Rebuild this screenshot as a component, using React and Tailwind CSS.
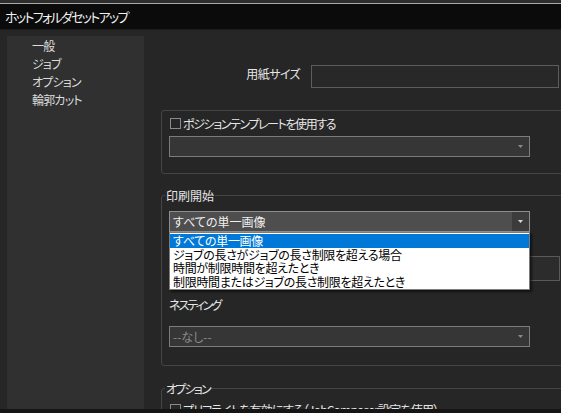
const jp = "font-['Noto_Sans_CJK_JP','Noto_Sans',sans-serif] [font-feature-settings:'palt']";

function Arrow({ color = '#9a9a9a' }) {
  return (
    <svg width="5" height="3" viewBox="0 0 5 3" className="shrink-0">
      <path d="M0 0H5L2.5 3Z" fill={color} />
    </svg>
  );
}

function Select({ value, muted, hover }) {
  return (
    <div
      className={`flex h-[21px] w-[361px] items-center border ${
        hover ? 'border-[#8e8e8e] bg-[#4e4e4e]' : 'border-[#7c7c7c] bg-[#363636]'
      }`}
    >
      <span className={`flex-1 pl-[3px] text-[12px] leading-[14px] ${muted ? 'text-[#8a8a8a]' : 'text-[#f0f0f0]'}`}>
        {value}
      </span>
      <div className={`flex h-full w-[17px] items-center justify-center ${hover ? 'bg-[#3c3c3c]' : ''}`}>
        <Arrow color={hover ? '#d8d8d8' : '#8a8a8a'} />
      </div>
    </div>
  );
}

function Check({ label, tracking }) {
  return (
    <div className="flex h-[11px] items-center gap-[2px] pl-[8px]">
      <div className="h-[11px] w-[11px] shrink-0 border border-[#8a8a8a]" />
      <span className={`whitespace-nowrap text-[12px] leading-[14px] text-[#e6e6e6] ${tracking}`}>{label}</span>
    </div>
  );
}

const options = [
  'すべての単一画像',
  'ジョブの長さがジョブの長さ制限を超える場合',
  '時間が制限時間を超えたとき',
  '制限時間またはジョブの長さ制限を超えたとき',
];

export default function App() {
  return (
    <div className={`flex h-[413px] w-[561px] flex-col overflow-hidden bg-[#262626] ${jp}`}>
      <div className="h-[3px] bg-[#2e2e2e]" />
      <div className="h-px bg-[#a9a9a9]" />
      <div className="flex h-[26px] items-center border-b border-[#1b1b1b] bg-[#0b0b0b] pl-[5px]">
        <span className="text-[13px] leading-[16px] tracking-[-1.7px] text-[#f2f2f2]">ホットフォルダセットアップ</span>
      </div>

      <div className="flex min-h-0 flex-1">
        <div className="ml-[7px] mt-[6px] w-[137px] shrink-0 bg-[#303030] pl-[25px] pt-[1px]">
          {['一般', 'ジョブ', 'オプション', '輪郭カット'].map((t) => (
            <div key={t} className="text-[12px] leading-[18px] tracking-[-0.8px] text-[#dcdcdc]">
              {t}
            </div>
          ))}
        </div>

        <div className="min-w-0 flex-1 overflow-hidden pt-[35px]">
          <div className="flex items-center justify-end gap-[11px] pr-[2px]">
            <span className="-mt-[5px] text-[12px] leading-[14px] tracking-[-0.6px] text-[#e6e6e6]">用紙サイズ</span>
            <div className="h-[23px] w-[248px] border border-[#5c5c5c] bg-[#282828]" />
          </div>

          <div className="ml-[17px] mt-[22px] h-[64px] w-[430px] rounded-[3px] border border-[#454545] pt-[7px]">
            <Check label="ポジションテンプレートを使用する" tracking="tracking-[-1.4px]" />
            <div className="mt-[7px] pl-[7px]">
              <Select value="" />
            </div>
          </div>

          <fieldset className="ml-[17px] mt-[12px] w-[430px] rounded-[3px] border border-[#454545] px-0 pb-[18px] pt-[7px]">
            <legend className="ml-[3px] px-[1px] pb-[1px] pt-[3px] text-[12px] leading-[14px] text-[#e6e6e6]">印刷開始</legend>
            <div className="relative pl-[7px]">
              <Select value="すべての単一画像" hover />
              <div className="absolute left-[7px] top-[21px] z-10 w-[361px] border border-[#7c7c7c] bg-white py-px shadow-[2px_2px_2px_rgba(0,0,0,0.55)]">
                {options.map((o, i) => (
                  <div
                    key={o}
                    className={`h-[13.5px] whitespace-nowrap pl-[3px] text-[12px] leading-[13.5px] tracking-[-0.3px] ${
                      i === 0 ? 'bg-[#0078d7] text-white' : 'text-black'
                    }`}
                  >
                    {o}
                  </div>
                ))}
              </div>
            </div>
            <div className="ml-[7px] mt-[24px] h-[25px] w-[391px] border border-[#595959] bg-[#2c2c2c]" />
            <div className="ml-[7px] mt-[17px] text-[12px] leading-[14px] tracking-[-2px] text-[#e6e6e6]">ネスティング</div>
            <div className="mt-[14px] pl-[7px]">
              <Select value="--なし--" muted />
            </div>
          </fieldset>

          <fieldset className="ml-[17px] mt-[13px] w-[430px] rounded-[3px] border border-[#454545] px-0 pb-[10px] pt-[7px]">
            <legend className="ml-[3px] px-[1px] pb-[1px] pt-[3px] text-[12px] leading-[14px] tracking-[-1.8px] text-[#e6e6e6]">オプション</legend>
            <Check label="プリフライトを有効にする（JobComposer設定を使用）" tracking="tracking-[-0.8px]" />
          </fieldset>
        </div>
      </div>
      <div className="h-[4px] shrink-0 bg-[#151515]" />
    </div>
  );
}
